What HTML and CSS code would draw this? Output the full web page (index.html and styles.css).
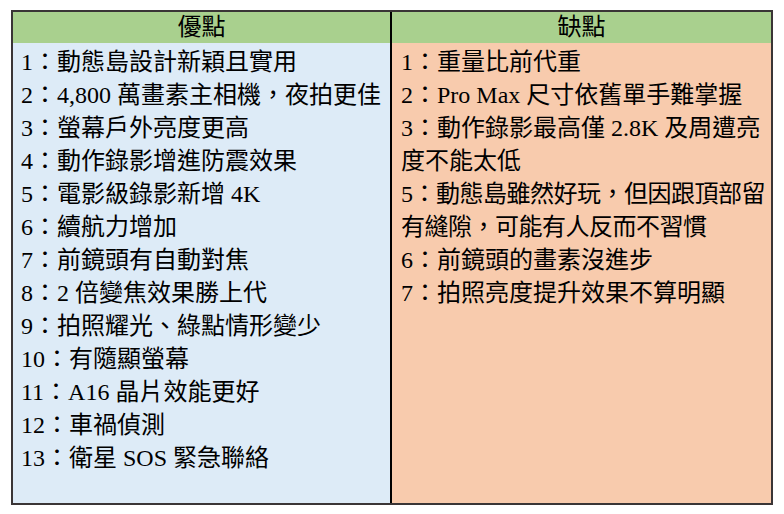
FILE: index.html
```html
<!DOCTYPE html>
<html lang="zh-Hant">
<head>
<meta charset="utf-8">
<title>優點 / 缺點</title>
<link rel="stylesheet" href="styles.css">
</head>
<body>
<div class="sheet">
  <div class="head head-left">優點</div>
  <div class="head">缺點</div>
  <div class="cell cell-pro">
    <div class="line">1：動態島設計新穎且實用</div>
    <div class="line">2：4,800 萬畫素主相機，夜拍更佳</div>
    <div class="line">3：螢幕戶外亮度更高</div>
    <div class="line">4：動作錄影增進防震效果</div>
    <div class="line">5：電影級錄影新增 4K</div>
    <div class="line">6：續航力增加</div>
    <div class="line">7：前鏡頭有自動對焦</div>
    <div class="line">8：2 倍變焦效果勝上代</div>
    <div class="line">9：拍照耀光、綠點情形變少</div>
    <div class="line">10：有隨顯螢幕</div>
    <div class="line">11：A16 晶片效能更好</div>
    <div class="line">12：車禍偵測</div>
    <div class="line">13：衛星 SOS 緊急聯絡</div>
  </div>
  <div class="cell cell-con">
    <div class="line">1：重量比前代重</div>
    <div class="line">2：Pro Max 尺寸依舊單手難掌握</div>
    <div class="line">3：動作錄影最高僅 2.8K 及周遭亮<br>度不能太低</div>
    <div class="line squeeze">5：動態島雖然好玩，但因跟頂部留<br>有縫隙，可能有人反而不習慣</div>
    <div class="line">6：前鏡頭的畫素沒進步</div>
    <div class="line">7：拍照亮度提升效果不算明顯</div>
  </div>
</div>
</body>
</html>
```
FILE: styles.css
```css
html, body {
  margin: 0;
  padding: 0;
  background: #ffffff;
}
body {
  padding: 10px 11px;
  font-family: "Liberation Serif", "Noto Sans CJK TC", serif;
  font-size: 24px;
  color: #000000;
}
.sheet {
  width: 758px;
  height: 491px;
  border: 2px solid #3a3536;
  display: grid;
  grid-template-columns: 379px 379px;
  grid-template-rows: 31px 1fr;
}
.head {
  background: #a9d08e;
  border-bottom: 2px solid #000000;
  text-align: center;
  line-height: 31px;
  height: 31px;
}
.head-left {
  border-right: 2px solid #000000;
}
.cell {
  padding: 3px 0 0 8px;
  overflow: hidden;
}
.cell-pro {
  background: #ddebf7;
  border-right: 2px solid #000000;
  padding-left: 8px;
}
.cell-con {
  background: #f8cbad;
  padding-left: 9px;
}
.line {
  line-height: 33px;
  white-space: nowrap;
}
.squeeze {
  letter-spacing: -0.5px;
}
```
